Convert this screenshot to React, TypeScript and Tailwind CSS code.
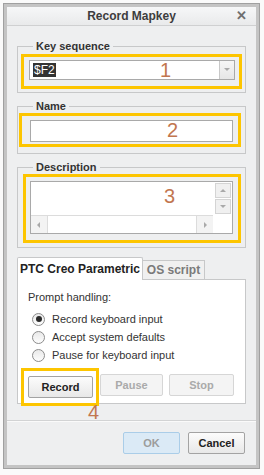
import React from 'react'

const font = { fontFamily: '"Liberation Sans", Arial, sans-serif' }

function Legend({ children }: { children: React.ReactNode }) {
  return (
    <legend className="ml-[15px] px-[3px] text-[11px] leading-[13px] font-bold text-[#333]">
      {children}
    </legend>
  )
}

function Num({ n, className }: { n: string; className: string }) {
  return (
    <span className={`absolute text-[20px] leading-[20px] text-[#c2764f] ${className}`}>{n}</span>
  )
}

function Radio({ checked, label }: { checked?: boolean; label: string }) {
  return (
    <div className="flex h-[18px] items-center">
      <span className="ml-[4px] flex h-[13px] w-[13px] items-center justify-center rounded-full border border-[#8c8c8c] bg-gradient-to-b from-[#e9e9e9] to-[#fdfdfd]">
        {checked && <span className="h-[6px] w-[6px] rounded-full bg-[#2a2a2a]" />}
      </span>
      <span className="ml-[7px] text-[11px] text-[#333]">{label}</span>
    </div>
  )
}

function Arrow({ dir }: { dir: 'up' | 'down' | 'left' | 'right' }) {
  const pts = {
    up: '1,5 4,2 7,5',
    down: '1,2 4,5 7,2',
    left: '5,1 2,4 5,7',
    right: '3,1 6,4 3,7',
  }[dir]
  return (
    <svg width="8" height="8" viewBox="0 0 8 8">
      <polygon points={pts} fill="#a9a9a9" />
    </svg>
  )
}

export default function App() {
  return (
    <div className="h-[475px] w-[264px] bg-[#fafafa] pl-[3px] pt-[3px]" style={font}>
      <div className="w-[257px] border border-[#a0a0a0]">
        <div className="flex h-[464px] flex-col border-[3px] border-[#c4c4c4] bg-[#eeeff0]">
          {/* title bar */}
          <div className="relative flex h-[19px] items-center justify-center border-b border-[#cfd0d1] bg-gradient-to-b from-[#f6f7f8] to-[#e9eaeb]">
            <span className="text-[12px] font-bold text-[#3d3d3d]">Record Mapkey</span>
            <span className="absolute right-[9px] top-[2px] text-[13px] font-bold leading-[14px] text-[#6e6e6e]">✕</span>
          </div>

          {/* key sequence */}
          <fieldset className="mx-[10px] mt-[14px] border border-[#c7c8c9] pb-[3px]">
            <Legend>Key sequence</Legend>
            <div className="relative mx-[3px] mt-[1px] border-[3px] border-[#fdc500] pb-[6px] pl-[5px] pr-[4px] pt-[3px]">
              <div className="flex h-[20px] border border-[#a9a9a9] bg-white">
                <div className="flex flex-1 items-center pl-[3px]">
                  <span className="bg-[#333] px-[1px] text-[12px] leading-[14px] text-white">$F2</span>
                </div>
                <div className="flex w-[15px] items-center justify-center border-l border-[#c8c8c8] bg-gradient-to-b from-[#f6f6f6] to-[#e6e6e6]">
                  <Arrow dir="down" />
                </div>
              </div>
              <Num n="1" className="left-[136px] top-[3px]" />
            </div>
          </fieldset>

          {/* name */}
          <fieldset className="mx-[10px] mt-[7px] border border-[#c7c8c9] pb-[6px]">
            <Legend>Name</Legend>
            <div className="relative ml-[1px] mr-[4px] border-[3px] border-[#fdc500] pb-[2px] pl-[8px] pr-[5px] pt-[4px]">
              <div className="h-[22px] border border-[#a9a9a9] bg-white" />
              <Num n="2" className="left-[145px] top-[4px]" />
            </div>
          </fieldset>

          {/* description */}
          <fieldset className="mx-[10px] mt-[7px] border border-[#c7c8c9] pb-[4px]">
            <Legend>Description</Legend>
            <div className="relative ml-[5px] mr-[4px] border-[3px] border-[#fdc500] pb-[6px] pl-[4px] pr-[5px] pt-[4px]">
              <div className="flex h-[53px] flex-col border border-[#a9a9a9] bg-white">
                <div className="flex flex-1">
                  <div className="flex-1" />
                  <div className="flex w-[18px] flex-col">
                    <div className="m-[1px] flex flex-1 items-center justify-center border border-[#d4d4d4] bg-[#f0f0f0]">
                      <Arrow dir="up" />
                    </div>
                    <div className="m-[1px] mt-0 flex flex-1 items-center justify-center border border-[#d4d4d4] bg-[#f0f0f0]">
                      <Arrow dir="down" />
                    </div>
                  </div>
                </div>
                <div className="flex h-[18px]">
                  <div className="flex flex-1 border-t border-[#dcdcdc]">
                    <div className="flex w-[17px] items-center justify-center border-r border-[#dcdcdc] bg-[#f3f3f3]">
                      <Arrow dir="left" />
                    </div>
                    <div className="flex-1" />
                    <div className="flex w-[17px] items-center justify-center border-l border-[#dcdcdc] bg-[#f3f3f3]">
                      <Arrow dir="right" />
                    </div>
                  </div>
                  <div className="w-[19px]" />
                </div>
              </div>
              <Num n="3" className="left-[138px] top-[9px]" />
            </div>
          </fieldset>

          {/* tabs */}
          <div className="mx-[10px] mt-[9px] flex items-end">
            <div className="relative z-10 -mb-px flex h-[23px] w-[126px] items-center justify-center rounded-t-[2px] border border-b-0 border-[#c7c8c9] bg-white text-[12px] font-bold text-[#222]">
              PTC Creo Parametric
            </div>
            <div className="flex h-[19px] w-[62px] items-center justify-center border border-b-0 border-l-0 border-[#c7c8c9] bg-[#f0f0f0] text-[12px] font-bold text-[#7a7a7a]">
              OS script
            </div>
          </div>
          <div className="mx-[10px] h-[125px] border border-[#c7c8c9] bg-white pl-[10px] pt-[11px]">
            <div className="text-[11px] leading-[13px] text-[#333]">Prompt handling:</div>
            <div className="mt-[6px] flex flex-col">
              <Radio checked label="Record keyboard input" />
              <Radio label="Accept system defaults" />
              <Radio label="Pause for keyboard input" />
            </div>
            <div className="mt-[10px] flex gap-[6px]">
              <div className="relative">
                <button className="h-[22px] w-[65px] rounded-[2px] border border-[#a3a3a3] bg-gradient-to-b from-[#fcfcfc] to-[#e8e8e8] text-[11px] font-bold text-[#222]">
                  Record
                </button>
                <span className="absolute -bottom-[8px] -left-[7px] -right-[6px] -top-[6px] border-[3px] border-[#fdc500]" />
                <Num n="4" className="-bottom-[24px] left-[60px]" />
              </div>
              <button className="ml-[1px] h-[22px] w-[63px] rounded-[2px] border border-[#d6d6d6] bg-[#f4f4f4] text-[11px] font-bold text-[#aaa]">
                Pause
              </button>
              <button className="h-[22px] w-[65px] rounded-[2px] border border-[#d6d6d6] bg-[#f4f4f4] text-[11px] font-bold text-[#aaa]">
                Stop
              </button>
            </div>
          </div>

          {/* footer */}
          <div className="mt-[16px] border-t border-[#d2d3d4] shadow-[0_1px_0_#fafafa]" />
          <div className="mr-[11px] mt-[11px] flex justify-end gap-[8px]">
            <button className="h-[22px] w-[57px] rounded-[2px] border border-[#aacde8] bg-[#dbeaf6] text-[11px] font-bold text-[#9c9c9c]">
              OK
            </button>
            <button className="h-[22px] w-[57px] rounded-[2px] border border-[#a3a3a3] bg-gradient-to-b from-[#fcfcfc] to-[#e8e8e8] text-[11px] font-bold text-[#222]">
              Cancel
            </button>
          </div>
        </div>
      </div>
    </div>
  )
}
